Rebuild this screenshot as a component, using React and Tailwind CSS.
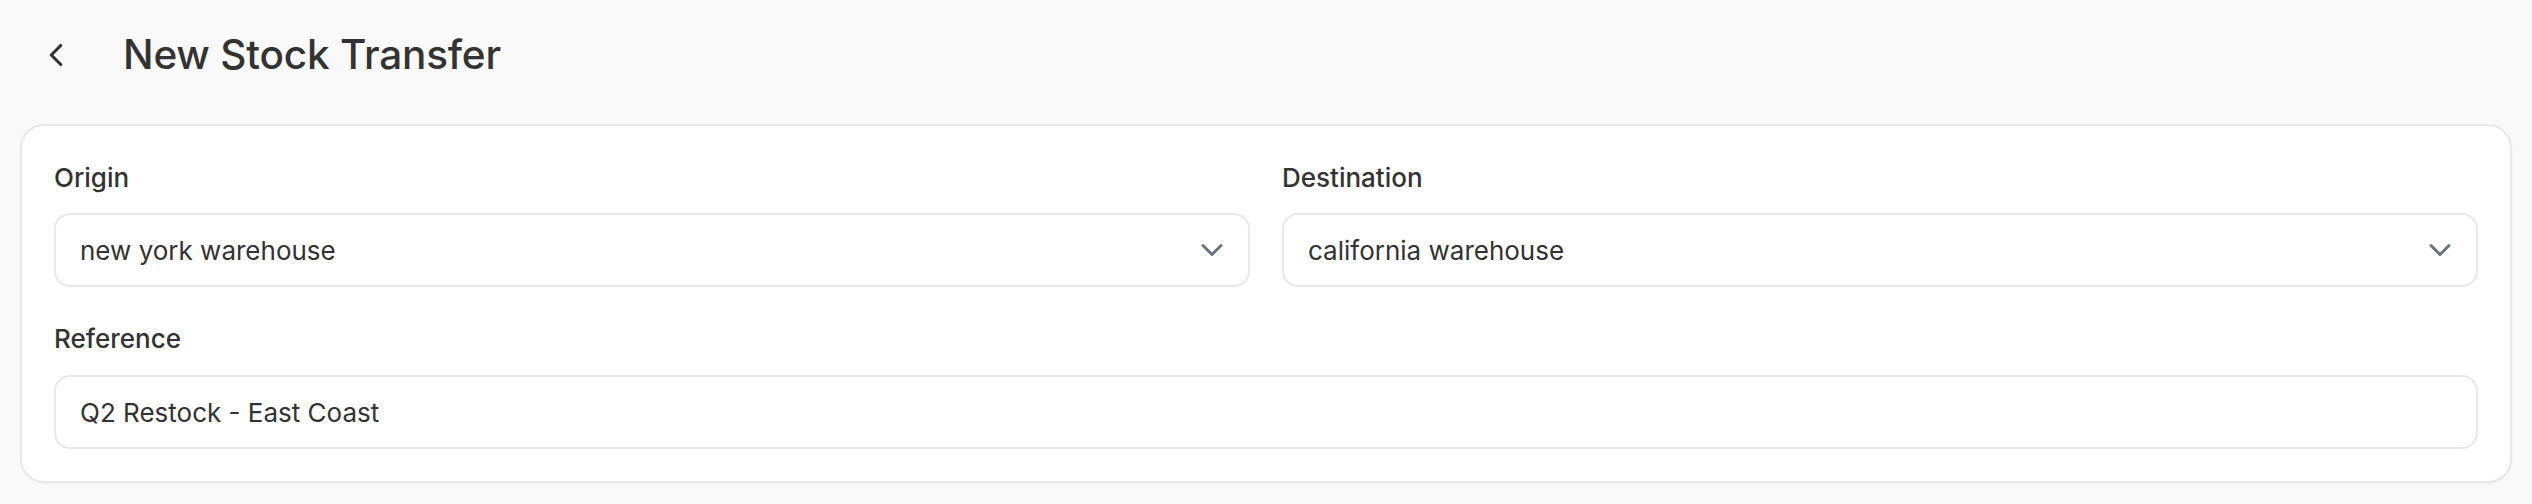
import { ChevronLeft, ChevronDown } from 'lucide-react';

function SelectField({ label, value }) {
  return (
    <div className="flex flex-col">
      <label className="text-[26px] leading-[36px] font-medium text-[#333333] mb-[17px]">{label}</label>
      <div className="flex items-center justify-between h-[74px] bg-white border-2 border-[#e8e8e8] rounded-[16px] pl-6 pr-[18px]">
        <span className="text-[26px] text-[#333333]">{value}</span>
        <ChevronDown className="w-[36px] h-[36px] text-[#6b7280]" strokeWidth={2} />
      </div>
    </div>
  );
}

export default function App() {
  return (
    <div
      className="min-h-[504px] w-full bg-[#f9f9f9] px-[20px]"
      style={{ fontFamily: 'Inter, "Liberation Sans", sans-serif' }}
    >
      {/* Header */}
      <div className="flex items-center h-[110px] pl-[17px] gap-[48px]">
        <button className="text-[#333333]">
          <ChevronLeft className="w-[38px] h-[38px]" strokeWidth={2} />
        </button>
        <h1 className="text-[40.5px] font-medium text-[#333333] tracking-[-0.2px]">New Stock Transfer</h1>
      </div>

      {/* Form card */}
      <div className="mt-[14px] bg-white border-2 border-[#e8e8e8] rounded-[24px] px-8 pt-[34px] pb-[32px] shadow-[0_1px_2px_rgba(0,0,0,0.04)]">
        <div className="grid grid-cols-2 gap-8">
          <SelectField label="Origin" value="new york warehouse" />
          <SelectField label="Destination" value="california warehouse" />
        </div>

        <div className="flex flex-col mt-[34px]">
          <label className="text-[26px] leading-[36px] font-medium text-[#333333] mb-[18px]">Reference</label>
          <input
            type="text"
            defaultValue="Q2 Restock - East Coast"
            className="h-[74px] bg-white border-2 border-[#e8e8e8] rounded-[16px] px-6 text-[26px] text-[#333333] outline-none"
          />
        </div>
      </div>
    </div>
  );
}
